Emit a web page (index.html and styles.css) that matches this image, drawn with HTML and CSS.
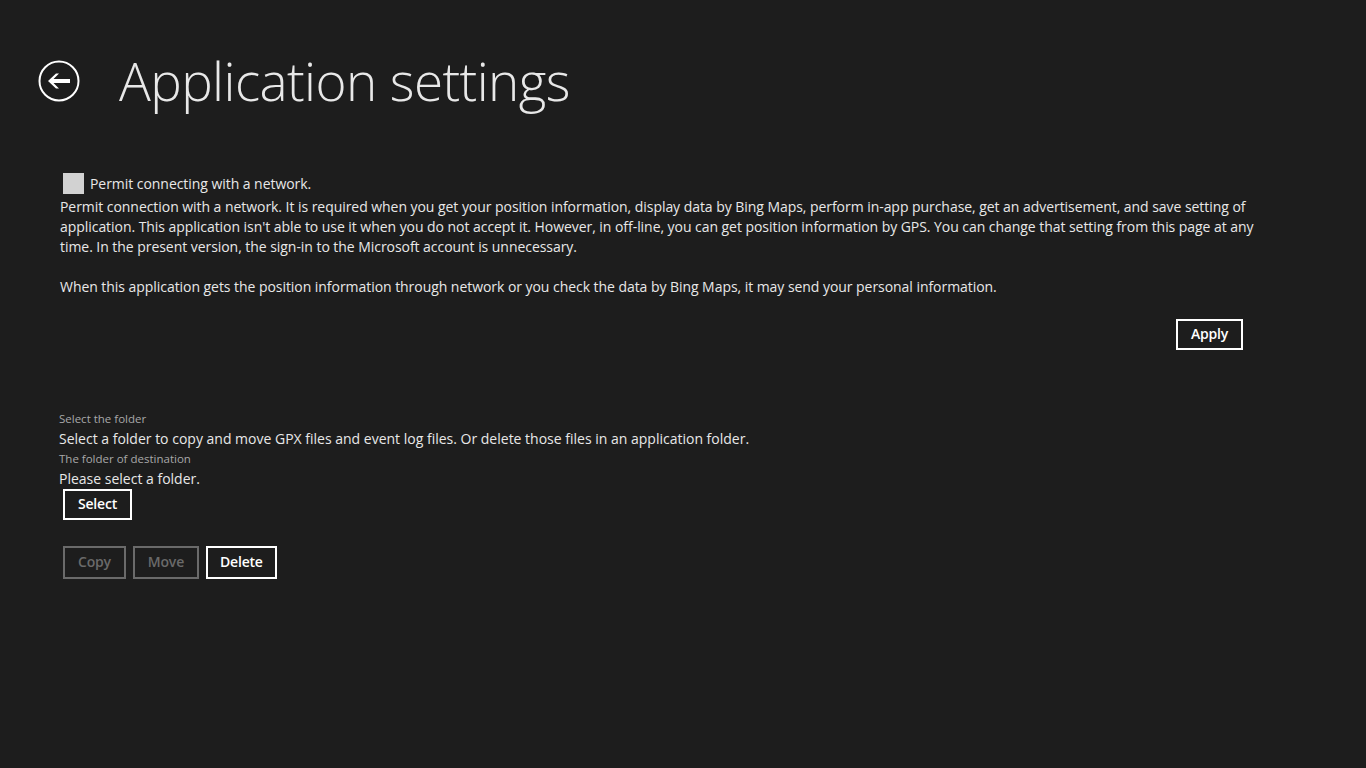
FILE: index.html
```html
<!DOCTYPE html>
<html>
<head>
<meta charset="utf-8">
<link rel="stylesheet" href="styles.css">
</head>
<body>
<div class="page">
  <header class="header">
    <button class="back" aria-label="Back">
      <svg width="42" height="42" viewBox="0 0 42 42">
        <circle cx="21" cy="21" r="19.5" fill="none" stroke="#ffffff" stroke-width="2"/>
        <path d="M10 21 L18 13.5 L21 13.5 L15.5 19 L32 19 L32 23 L15.5 23 L21 28.5 L18 28.5 Z" fill="#ffffff"/>
      </svg>
    </button>
    <h1 class="title">Application settings</h1>
  </header>

  <section class="network">
    <label class="check">
      <span class="box"></span>
      <span class="check-label">Permit connecting with a network.</span>
    </label>
    <p class="desc">Permit connection with a network. It is required when you get your position information, display data by Bing Maps, perform in-app purchase, get an advertisement, and save setting of<br>application. This application isn't able to use it when you do not accept it. However, in off-line, you can get position information by GPS. You can change that setting from this page at any<br>time. In the present version, the sign-in to the Microsoft account is unnecessary.</p>
    <p class="desc second">When this application gets the position information through network or you check the data by Bing Maps, it may send your personal information.</p>
    <div class="apply-row">
      <button class="btn">Apply</button>
    </div>
  </section>

  <section class="folder">
    <div class="caption">Select the folder</div>
    <div class="text">Select a folder to copy and move GPX files and event log files. Or delete those files in an application folder.</div>
    <div class="caption">The folder of destination</div>
    <div class="text">Please select a folder.</div>
    <button class="btn select">Select</button>
    <div class="actions">
      <button class="btn disabled">Copy</button>
      <button class="btn disabled">Move</button>
      <button class="btn delete">Delete</button>
    </div>
  </section>
</div>
</body>
</html>
```

FILE: styles.css
```css
html, body {
  margin: 0;
  padding: 0;
  background: #1d1d1d;
}
body {
  width: 1366px;
  height: 768px;
  overflow: hidden;
  color: #e8e8e8;
  font-family: "Open Sans", "Noto Sans", sans-serif;
}
.page {
  padding-left: 60px;
}
.header {
  display: flex;
  align-items: center;
  height: 162px;
  margin-left: -22px;
  box-sizing: border-box;
}
.back {
  width: 42px;
  height: 42px;
  padding: 0;
  border: none;
  background: transparent;
  display: flex;
  margin-top: -1px;
}
.title {
  margin: -2px 0 0 39px;
  font-weight: 300;
  font-size: 53px;
  letter-spacing: -0.6px;
  color: #e8e8e8;
  line-height: 1;
}
.network {
  padding-top: 10px;
}
.check {
  display: flex;
  align-items: center;
  gap: 6px;
  margin-left: 3px;
  height: 22px;
}
.box {
  width: 21px;
  height: 21px;
  background: #d2d2d2;
}
.check-label {
  font-size: 14px;
  letter-spacing: -0.05px;
}
.desc {
  margin: 3px 0 0;
  font-size: 14px;
  line-height: 19.8px;
  letter-spacing: -0.05px;
  white-space: nowrap;
}
.desc.second {
  margin-top: 21px;
}
.apply-row {
  display: flex;
  justify-content: flex-end;
  width: 1183px;
  margin-top: 22px;
}
.btn {
  height: 31px;
  padding: 0 13px 2px;
  border: 2px solid #ffffff;
  background: transparent;
  color: #ffffff;
  font-family: "Open Sans", "Noto Sans", sans-serif;
  font-size: 14px;
  font-weight: 600;
  letter-spacing: -0.2px;
}
.btn.disabled {
  border-color: #6a6a6a;
  color: #6a6a6a;
}
.btn.delete {
  padding: 0 12px 2px;
}
.folder {
  margin-top: 59px;
  margin-left: -1px;
}
.caption {
  font-size: 11.5px;
  color: #a8a8a8;
  line-height: 19px;
  height: 19px;
}
.text {
  font-size: 14px;
  line-height: 21px;
  letter-spacing: 0;
}
.select {
  margin-left: 4px;
  display: block;
}
.actions {
  display: flex;
  gap: 7px;
  margin-left: 4px;
  margin-top: 26px;
}
.actions .btn {
  height: 33px;
}
```
